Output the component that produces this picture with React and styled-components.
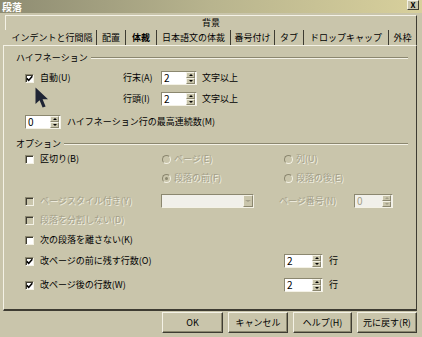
import React from "react";
import styled, { createGlobalStyle } from "styled-components";

const face = "#c9c5ab";
const light = "#f4f2e6";
const shadow = "#8b876f";
const dark = "#3e3c32";
const dim = "#a39f89";

const GlobalStyle = createGlobalStyle`
  html, body { margin: 0; padding: 0; background: ${face}; overflow: hidden; }
  body { font-family: "Noto Sans CJK JP", "Noto Sans", sans-serif; font-size: 9px; color: #000; }
  * { box-sizing: border-box; }
`;

const Window = styled.div`
  width: 422px;
  height: 337px;
  display: flex;
  flex-direction: column;
  background: ${face};
`;

const TitleBar = styled.div`
  height: 13px;
  display: flex;
  justify-content: space-between;
  align-items: center;
  padding: 0 3px 0 2px;
  background: linear-gradient(to right, #8e8c72, #b8b48e 50%, #d8d09c);
  color: #fff;
  font-weight: 700;
  font-size: 10px;
  line-height: 13px;
`;

const CloseBox = styled.div`
  align-self: flex-start;
  width: 12px;
  height: 10px;
  background: ${face};
  border: 1px solid;
  border-color: ${light} ${dark} ${dark} ${light};
  color: #000;
  font-size: 8px;
  line-height: 8px;
  text-align: center;
`;

const TopTab = styled.div`
  margin: 2px 5px 0 5px;
  height: 15px;
  border-top: 1px solid ${light};
  border-left: 1px solid ${light};
  border-right: 1px solid ${dark};
  text-align: center;
  line-height: 14px;
`;

const TabStrip = styled.div`
  display: flex;
  height: 15px;
  margin-left: 8px;
`;

const Tab = styled.div`
  width: ${(p) => p.$w}px;
  flex-shrink: 0;
  border-right: 1px solid ${dark};
  text-align: center;
  line-height: 15px;
  white-space: nowrap;
  overflow: hidden;
  font-weight: ${(p) => (p.$active ? 700 : 400)};
`;

const Panel = styled.div`
  position: relative;
  height: 266px;
  margin: 0 5px 0 3px;
  padding: 0 8px 0 12px;
  border-top: 1px solid ${light};
  border-left: 1px solid ${light};
  border-right: 1px solid ${dark};
  border-bottom: 2px solid ${dark};
  display: flex;
  flex-direction: column;
`;

const SectionHeader = styled.div`
  display: flex;
  align-items: center;
  gap: 3px;
  height: 11px;
  line-height: 11px;
  margin-top: ${(p) => p.$mt}px;
  &::after {
    content: "";
    flex: 1;
    border-top: 1px solid ${shadow};
    border-bottom: 1px solid ${light};
  }
`;

const Row = styled.div`
  display: flex;
  align-items: center;
  height: 14px;
  margin-top: ${(p) => p.$mt}px;
  padding-left: 9px;
`;

const Cell = styled.div`
  width: ${(p) => p.$w}px;
  margin-left: ${(p) => p.$ml || 0}px;
  flex-shrink: 0;
  display: flex;
  align-items: center;
  gap: 6px;
  white-space: nowrap;
`;

const Text = styled.span`
  white-space: nowrap;
  margin-left: ${(p) => p.$ml || 0}px;
  color: ${(p) => (p.$off ? dim : "#000")};
  text-shadow: ${(p) => (p.$off ? `1px 1px 0 ${light}` : "none")};
  line-height: 14px;
`;

const Box = styled.span`
  width: 9px;
  height: 9px;
  flex-shrink: 0;
  border: 1px solid;
  border-color: ${shadow} ${light} ${light} ${shadow};
  box-shadow: inset 1px 1px 0 ${dark};
  background: ${(p) => (p.$off ? face : "#fff")};
  display: flex;
  align-items: center;
  justify-content: center;
`;

const Round = styled.span`
  width: 9px;
  height: 9px;
  flex-shrink: 0;
  border-radius: 50%;
  border: 1px solid;
  border-color: ${shadow} ${light} ${light} ${shadow};
  background: ${face};
  display: flex;
  align-items: center;
  justify-content: center;
  &::after {
    content: "";
    width: 3px;
    height: 3px;
    border-radius: 50%;
    background: ${(p) => (p.$on ? shadow : "transparent")};
  }
`;

const RadioWrap = styled.span`
  display: flex;
  align-items: center;
  gap: 3px;
`;

const Field = styled.div`
  width: ${(p) => p.$w}px;
  height: 14px;
  flex-shrink: 0;
  display: flex;
  border: 1px solid;
  border-color: ${shadow} ${light} ${light} ${shadow};
  background: ${(p) => (p.$off ? "#f1f0ea" : "#fff")};
`;

const FieldValue = styled.span`
  flex: 1;
  padding-left: 2px;
  line-height: 12px;
  font-size: 10px;
  color: ${(p) => (p.$off ? dim : "#000")};
`;

const Spinner = styled.div`
  width: 9px;
  display: flex;
  flex-direction: column;
  margin: 0 1px 0 0;
`;

const SpinHalf = styled.div`
  flex: 1;
  background: ${face};
  border: 1px solid;
  border-color: ${light} ${shadow} ${shadow} ${light};
  display: flex;
  align-items: center;
  justify-content: center;
  &::after {
    content: "";
    border-left: 2px solid transparent;
    border-right: 2px solid transparent;
    ${(p) => (p.$up ? "border-bottom" : "border-top")}: 2px solid ${(p) => (p.$off ? dim : "#000")};
  }
`;

const DropButton = styled(SpinHalf)`
  flex: none;
  width: 10px;
  &::after {
    border-left-width: 3px;
    border-right-width: 3px;
  }
`;

const Cursor = styled.svg`
  position: absolute;
  left: 31px;
  top: 41px;
`;

const ButtonRow = styled.div`
  display: flex;
  justify-content: flex-end;
  gap: 5px;
  margin-top: 1px;
  padding-right: 5px;
`;

const Button = styled.div`
  width: ${(p) => p.$w}px;
  height: 21px;
  border: 1px solid;
  border-color: ${light} ${dark} ${dark} ${light};
  box-shadow: inset -1px -1px 0 ${shadow};
  text-align: center;
  line-height: 19px;
`;

function Check({ on, off, children }) {
  return (
    <>
      <Box $off={off}>
        {on && (
          <svg width="7" height="7" viewBox="0 0 7 7">
            <path d="M0.8 3.4 L2.7 5.4 L6.3 1.2" fill="none" stroke="#000" strokeWidth="1.6" />
          </svg>
        )}
      </Box>
      <Text $off={off}>{children}</Text>
    </>
  );
}

function Radio({ on, off, children }) {
  return (
    <RadioWrap>
      <Round $on={on} />
      <Text $off={off}>{children}</Text>
    </RadioWrap>
  );
}

function Spin({ w, value, off }) {
  return (
    <Field $w={w} $off={off}>
      <FieldValue $off={off}>{value}</FieldValue>
      <Spinner>
        <SpinHalf $up $off={off} />
        <SpinHalf $off={off} />
      </Spinner>
    </Field>
  );
}

const tabs = [
  ["インデントと行間隔", 89],
  ["配置", 29],
  ["体裁", 31, true],
  ["日本語文の体裁", 74],
  ["番号付け", 44],
  ["タブ", 29],
  ["ドロップキャップ", 85],
  ["外枠", 28],
];

export default function App() {
  return (
    <>
      <GlobalStyle />
      <Window>
        <TitleBar>
          <span>段落</span>
          <CloseBox>X</CloseBox>
        </TitleBar>
        <TopTab>背景</TopTab>
        <TabStrip>
          {tabs.map(([label, w, active]) => (
            <Tab key={label} $w={w} $active={active}>
              {label}
            </Tab>
          ))}
        </TabStrip>
        <Panel>
          <SectionHeader $mt={6}>ハイフネーション</SectionHeader>
          <Row $mt={8}>
            <Cell $w={98}>
              <Check on>自動(U)</Check>
            </Cell>
            <Cell $w={38}>
              <Text>行末(A)</Text>
            </Cell>
            <Spin w={36} value="2" />
            <Text $ml={5}>文字以上</Text>
          </Row>
          <Row $mt={7}>
            <Cell $w={98} />
            <Cell $w={38}>
              <Text>行頭(I)</Text>
            </Cell>
            <Spin w={36} value="2" />
            <Text $ml={5}>文字以上</Text>
          </Row>
          <Row $mt={9}>
            <Spin w={36} value="0" />
            <Text $ml={6}>ハイフネーション行の最高連続数(M)</Text>
          </Row>
          <SectionHeader $mt={9}>オプション</SectionHeader>
          <Row $mt={3}>
            <Cell $w={137}>
              <Check>区切り(B)</Check>
            </Cell>
            <Cell $w={122}>
              <Radio off>ページ(E)</Radio>
            </Cell>
            <Cell $w={100}>
              <Radio off>列(U)</Radio>
            </Cell>
          </Row>
          <Row $mt={5}>
            <Cell $w={137} />
            <Cell $w={122}>
              <Radio on off>段落の前(F)</Radio>
            </Cell>
            <Cell $w={100}>
              <Radio off>段落の後(E)</Radio>
            </Cell>
          </Row>
          <Row $mt={9}>
            <Cell $w={136}>
              <Check off>ページスタイル付き(Y)</Check>
            </Cell>
            <Field $w={93} $off>
              <FieldValue />
              <DropButton $off />
            </Field>
            <Cell $w={75} $ml={25}>
              <Text $off>ページ番号(N)</Text>
            </Cell>
            <Spin w={39} value="0" off />
          </Row>
          <Row $mt={5}>
            <Cell $w={200}>
              <Check off>段落を分割しない(D)</Check>
            </Cell>
          </Row>
          <Row $mt={6}>
            <Cell $w={200}>
              <Check>次の段落を離さない(K)</Check>
            </Cell>
          </Row>
          <Row $mt={7}>
            <Cell $w={259}>
              <Check on>改ページの前に残す行数(O)</Check>
            </Cell>
            <Spin w={39} value="2" />
            <Text $ml={6}>行</Text>
          </Row>
          <Row $mt={10}>
            <Cell $w={259}>
              <Check on>改ページ後の行数(W)</Check>
            </Cell>
            <Spin w={39} value="2" />
            <Text $ml={6}>行</Text>
          </Row>
          <Cursor width="14" height="22" viewBox="0 0 14 22">
            <path d="M0.5 0.5 L0.5 17 L4.6 13.2 L7.6 20.6 L10.6 19.4 L7.6 12.3 L13 12.3 Z" fill="#1f2535" />
          </Cursor>
        </Panel>
        <ButtonRow>
          <Button $w={61}>OK</Button>
          <Button $w={60}>キャンセル</Button>
          <Button $w={59}>ヘルプ(H)</Button>
          <Button $w={60}>元に戻す(R)</Button>
        </ButtonRow>
      </Window>
    </>
  );
}
